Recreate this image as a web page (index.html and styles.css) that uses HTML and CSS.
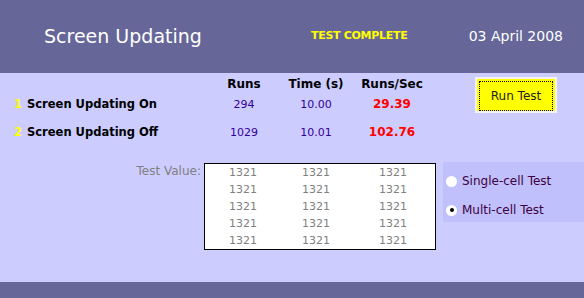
FILE: index.html
```html
<!DOCTYPE html>
<html lang="en">
<head>
  <meta charset="UTF-8">
  <title>Screen Updating</title>
  <link rel="stylesheet" href="styles.css">
</head>
<body>

  <div class="header">
    <h1 class="title">Screen Updating</h1>
    <span class="status">TEST COMPLETE</span>
    <span class="date">03 April 2008</span>
  </div>

  <div class="main">
    <div class="top">
      <div class="results">
        <div></div>
        <div class="col-head">Runs</div>
        <div class="col-head">Time (s)</div>
        <div class="col-head">Runs/Sec</div>

        <div class="label"><span class="num">1</span>Screen Updating On</div>
        <div class="val">294</div>
        <div class="val">10.00</div>
        <div class="rate">29.39</div>

        <div class="label"><span class="num">2</span>Screen Updating Off</div>
        <div class="val">1029</div>
        <div class="val">10.01</div>
        <div class="rate">102.76</div>
      </div>

      <button class="run-btn" type="button"><span>Run Test</span></button>
    </div>

    <div class="bottom">
      <div class="test-label">Test Value:</div>
      <div class="values">
        <span>1321</span><span>1321</span><span>1321</span>
        <span>1321</span><span>1321</span><span>1321</span>
        <span>1321</span><span>1321</span><span>1321</span>
        <span>1321</span><span>1321</span><span>1321</span>
        <span>1321</span><span>1321</span><span>1321</span>
      </div>
      <div class="options">
        <label class="option"><span class="radio"></span>Single-cell Test</label>
        <label class="option"><span class="radio checked"></span>Multi-cell Test</label>
      </div>
    </div>
  </div>

  <div class="footer"></div>

</body>
</html>
```

FILE: styles.css
```css
body {
  font-family: "DejaVu Sans", Verdana, sans-serif;
  background-color: #ccccff;
  margin: 0;
  padding: 0;
  width: 584px;
  height: 298px;
  display: flex;
  flex-direction: column;
  overflow: hidden;
}

.header {
  background-color: #666699;
  height: 73px;
  display: flex;
  align-items: center;
  padding: 0 21px 0 44px;
  white-space: nowrap;
}

.title {
  margin: 0 0 2px 0;
  font-size: 19px;
  font-weight: normal;
  color: #fff;
  width: 267px;
}

.status {
  color: #ffff00;
  font-size: 11px;
  font-weight: bold;
  width: 155px;
  letter-spacing: -0.3px;
  margin-bottom: 2px;
}

.date {
  color: #fff;
  font-size: 14px;
  margin-left: auto;
  margin-bottom: 2px;
}

.main {
  flex: 1;
}

.top {
  display: flex;
  padding-top: 3px;
}

.results {
  display: grid;
  grid-template-columns: 212px 64px 80px 72px;
  grid-template-rows: 16px 24px 32px;
  align-items: center;
  font-size: 11px;
}

.col-head {
  font-weight: bold;
  text-align: center;
  color: #000;
  font-size: 12px;
}

.label {
  font-weight: bold;
  font-size: 11.5px;
  padding-left: 14px;
  color: #000;
}

.num {
  color: #ffff00;
  margin-right: 5px;
}

.val {
  text-align: center;
  color: #330099;
}

.rate {
  text-align: center;
  color: #ff0000;
  font-weight: bold;
  font-size: 12px;
}

.run-btn {
  margin: 1px 0 0 47px;
  width: 82px;
  height: 36px;
  padding: 2px;
  background-color: #ffff00;
  border: 2px solid #f4f4f4;
  font-family: inherit;
  font-size: 12px;
  color: #222;
  cursor: pointer;
}

.run-btn span {
  display: flex;
  align-items: center;
  justify-content: center;
  height: 100%;
  border: 1px dotted #000;
}

.bottom {
  display: flex;
  margin-top: 14px;
  align-items: flex-start;
}

.test-label {
  width: 201px;
  padding-top: 1px;
  text-align: right;
  color: #808080;
  font-size: 12px;
  line-height: 17px;
  margin-right: 3px;
}

.values {
  margin-top: 1px;
  width: 230px;
  background-color: #fff;
  border: 1px solid #000;
  display: grid;
  grid-template-columns: 76px 70px 84px;
  grid-auto-rows: 17px;
  align-items: center;
  font-size: 11px;
  color: #808080;
}

.values span {
  text-align: center;
}

.options {
  margin-left: 7px;
  width: 141px;
  height: 60px;
  background-color: #c0c0fc;
  display: flex;
  flex-direction: column;
  gap: 11px;
  padding-top: 10px;
  box-sizing: border-box;
}

.option {
  display: flex;
  align-items: center;
  height: 18px;
  font-size: 12px;
  color: #400040;
}

.radio {
  width: 11px;
  height: 11px;
  border-radius: 50%;
  background-color: #fff;
  margin: 0 5px 0 3px;
  display: flex;
  align-items: center;
  justify-content: center;
}

.radio.checked::after {
  content: "";
  width: 4px;
  height: 4px;
  border-radius: 50%;
  background-color: #000;
}

.footer {
  background-color: #666699;
  height: 16px;
}
```
